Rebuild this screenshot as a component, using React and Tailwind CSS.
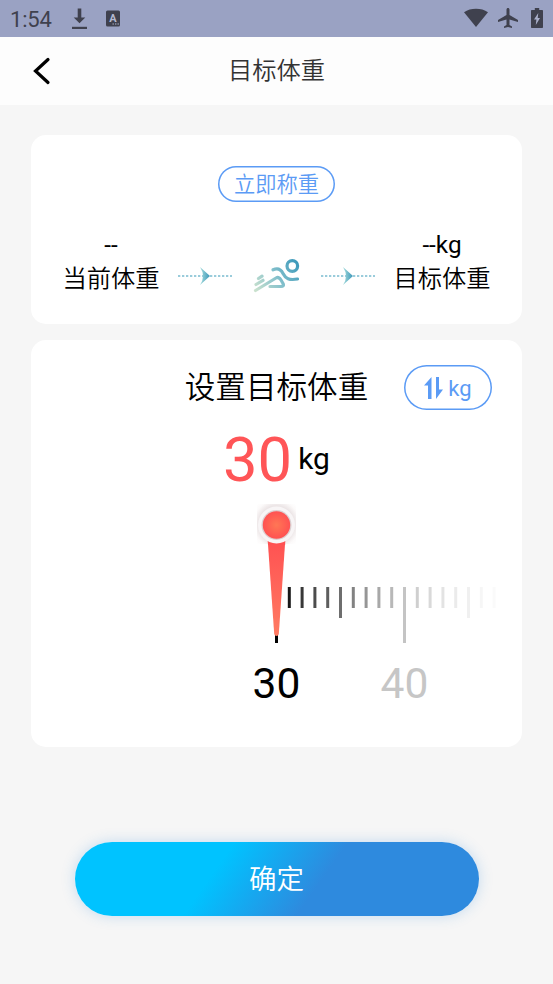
import React, { useState } from 'react';

const START = 276.5;
const STEP = 12.8;

// the scale fades out towards the edge of the card
const TICK_OPACITY = [1, 0.9, 0.78, 0.7, 0.63, 0.57, 0.49, 0.41, 0.34, 0.28, 0.23, 0.19, 0.15, 0.11, 0.08, 0.06, 0.035, 0.018];

const tickHeight = (i) => {
  if (i % 10 === 0) return 56;
  if (i % 5 === 0) return 31;
  return 21;
};

const StatusBar = () => (
  <div className="flex h-[37px] items-center justify-between bg-[#9aa2c3] pl-[10px] pr-[10px] text-[#3f414e]">
    <div className="flex items-center">
      <span className="w-[61px] pt-[2px] font-[Roboto] text-[22px] leading-[35px] tracking-[-0.2px]">1:54</span>
      <svg width="17" height="22" viewBox="0 0 17 22" fill="currentColor">
        <path d="M6.7 0.5h3.6v9h4L8.5 15.2 2.7 9.5h4z" />
        <path d="M1 18.8h15v2.2H1z" />
      </svg>
      <svg className="ml-[17px]" width="16" height="17" viewBox="0 0 16 17">
        <rect x="1" y="0.5" width="14" height="16" rx="1.5" fill="currentColor" />
        <text x="8" y="12" textAnchor="middle" fontFamily="Roboto" fontWeight="700" fontSize="11" fill="#b4b9d0">A</text>
        <path d="M7.500 14h1.400M10 14h1.400M12.500 14h1.400" stroke="#b4b9d0" strokeWidth="1" />
      </svg>
    </div>
    <div className="flex items-center pb-[1px]">
      <svg width="24" height="20" viewBox="0 0 24 20" fill="currentColor">
        <path d="M12 19L0 4.300C3.500 1.800 7.500 .8 12 .8s8.500 1 12 3.500z" />
      </svg>
      <svg className="ml-[10px]" width="20" height="20" viewBox="2 2 20 20" fill="currentColor">
        <path d="M22 16v-2l-8.500-5V3.500C13.500 2.670 12.830 2 12 2s-1.500.670-1.500 1.500V9L2 14v2l8.500-2.500V19L8 20.500V22l4-1 4 1v-1.500L13.500 19v-5.500z" />
      </svg>
      <svg className="ml-[13px]" width="12" height="20" viewBox="0 0 12 20">
        <path d="M3.800 0h4.400v2H11c.6 0 1 .4 1 1v16c0 .6-.4 1-1 1H1c-.6 0-1-.4-1-1V3c0-.6.4-1 1-1h2.800z" fill="currentColor" />
        <path d="M7.300 5L3 11.500h2.400L4.800 17 9 10H6.700z" fill="#aab0cb" />
      </svg>
    </div>
  </div>
);

const DashArrow = ({ id }) => (
  <svg width="56" height="20" viewBox="0 0 56 20">
    <defs>
      <linearGradient id={id} x1="0" x2="1" y1="0" y2="0">
        <stop offset="0" stopColor="#a5dcdc" />
        <stop offset="1" stopColor="#3d97b9" />
      </linearGradient>
    </defs>
    <path d="M1 10h54" stroke="#79bcd0" strokeWidth="1.700" strokeDasharray="2.300 1.700" />
    <path d="M23 1L33 10 23 19Q29 10 23 1z" fill={`url(#${id})`} />
  </svg>
);

const Runner = () => (
  <svg width="50" height="36" viewBox="252 258 50 36" fill="none" stroke="url(#runner)" strokeWidth="3.200" strokeLinecap="round" strokeLinejoin="round">
    <defs>
      <linearGradient id="runner" gradientUnits="userSpaceOnUse" x1="255" y1="291" x2="297" y2="262">
        <stop offset="0" stopColor="#cbe2ce" />
        <stop offset="0.500" stopColor="#85c1cc" />
        <stop offset="1" stopColor="#3d99ba" />
      </linearGradient>
    </defs>
    <circle cx="292.300" cy="266" r="5.300" />
    <path d="M273 269.800C278 267.600 281 269.500 283 273.500C285.500 278.500 289 280.500 297.500 279" />
    <path d="M255.500 290.500L276 278C278 276.800 279.500 277.500 281 280L283 283.500C284 285.500 283 286.500 281 286.500H270" />
    <path d="M256 284.500L263 280.300M258.500 278.500L262 276.200" />
  </svg>
);

const Ruler = () => (
  <svg className="block" width="491" height="207" viewBox="31 500 491 207">
    <defs>
      <linearGradient id="needle" x1="0" x2="0" y1="0" y2="1">
        <stop offset="0" stopColor="#ff5152" />
        <stop offset="1" stopColor="#ff7b62" />
      </linearGradient>
      <radialGradient id="knob">
        <stop offset="0" stopColor="#ff7755" />
        <stop offset="1" stopColor="#ff5252" />
      </radialGradient>
      <radialGradient id="halo" r="0.700">
        <stop offset="0.640" stopColor="#ebe4e5" />
        <stop offset="0.850" stopColor="#fcfafa" />
        <stop offset="1" stopColor="#fff" />
      </radialGradient>
    </defs>
    {TICK_OPACITY.map((opacity, i) => (
      <rect key={i} x={START + i * STEP - 1.5} y="587" width="3" height={tickHeight(i)} opacity={opacity} />
    ))}
    <path d="M267.700 540H285.300L278.800 634Q278.300 636 276.500 636T274.200 634z" fill="url(#needle)" />
    <rect x="257" y="504" width="39" height="40" fill="url(#halo)" />
    <path d="M267.700 541H285.300L285.100 545H268z" fill="#ff5152" />
    <circle cx="276.500" cy="525" r="18.500" fill="#f8f5f6" />
    <circle cx="276.500" cy="525" r="15" fill="#dccfd0" />
    <circle cx="276.500" cy="525" r="13.700" fill="url(#knob)" />
    <text x="276.500" y="697.500" textAnchor="middle" fontFamily="Roboto" fontSize="42.500" fill="#000">30</text>
    <text x="404.500" y="697.500" textAnchor="middle" fontFamily="Roboto" fontSize="42.500" fill="#c6c6c6">40</text>
  </svg>
);

const App = () => {
  const [unit] = useState('kg');

  return (
    <div className="flex h-[984px] w-[553px] flex-col bg-[#f6f6f6] font-[Roboto,'Noto_Sans_CJK_SC',sans-serif] text-black">
      <StatusBar />

      <header className="grid h-[68px] grid-cols-[80px_1fr_80px] items-center bg-[#fdfdfd]">
        <button className="pl-[33px]">
          <svg width="18" height="28" viewBox="0 0 18 28" fill="none" stroke="#000" strokeWidth="3.200" strokeLinecap="round">
            <path d="M15 2.500L2.500 14L15 25.500" />
          </svg>
        </button>
        <h1 className="text-center text-[24.300px] font-[350] leading-[36px] text-[#333]">目标体重</h1>
      </header>

      <section className="mx-[31px] mt-[30px] flex h-[189px] flex-col items-center rounded-[15px] bg-white pt-[31px]">
        <button className="h-[36px] w-[117px] rounded-full pt-[2px] text-[21.300px] font-[350] leading-[34px] text-[#5b9bf5] shadow-[inset_0_0_0_1.5px_#5b9bf5]">
          立即称重
        </button>
        <div className="mt-[26px] flex w-full items-end justify-between px-[31px]">
          <div className="w-[98px] text-center text-[24.300px] leading-[33px]">
            <p>--</p>
            <p className="pt-[3px] font-[350] leading-[30px]">当前体重</p>
          </div>
          <div className="flex h-[36px] items-center">
            <DashArrow id="arrowLeft" />
            <div className="ml-[19px] mr-[18px]">
              <Runner />
            </div>
            <DashArrow id="arrowRight" />
          </div>
          <div className="w-[98px] text-center text-[24.300px] leading-[33px]">
            <p>--{unit}</p>
            <p className="pt-[3px] font-[350] leading-[30px]">目标体重</p>
          </div>
        </div>
      </section>

      <section className="mx-[31px] mt-4 h-[407px] rounded-[15px] bg-white pt-[25px]">
        <div className="grid h-[45px] grid-cols-[1fr_auto_1fr] items-center pr-[30px]">
          <h2 className="col-start-2 ml-[30px] text-[30.600px] font-[350] leading-[42px]">设置目标体重</h2>
          <button className="flex h-[45px] w-[88px] items-center justify-center justify-self-end rounded-full text-[#5b9bf5] shadow-[inset_0_0_0_1.5px_#5b9bf5]">
            <svg width="19" height="22" viewBox="0 0 19 22" fill="currentColor">
              <path d="M7.500 0v22H4V8.500H0zM12 0h3v12.500h4L12 22z" />
            </svg>
            <span className="ml-[5px] pt-[2px] text-[22px] leading-[30px]">{unit}</span>
          </button>
        </div>
        <div className="flex h-[90px] items-center justify-center pt-[8px]">
          <span className="pt-[1px] text-[61.500px] leading-[70px] text-[#ff5557]">30</span>
          <span className="ml-[6px] text-[30px] leading-[42px]">{unit}</span>
        </div>
        <Ruler />
      </section>

      <button className="ml-[74.5px] mt-[95px] h-[74px] w-[404px] rounded-full bg-[linear-gradient(125deg,#00c3ff_35%,#2e8ade_60%)] pt-[2px] text-[27.500px] font-[350] text-white shadow-[0_0_14px_rgba(46,138,222,0.25)]">
        确定
      </button>
    </div>
  );
};

export default App;
